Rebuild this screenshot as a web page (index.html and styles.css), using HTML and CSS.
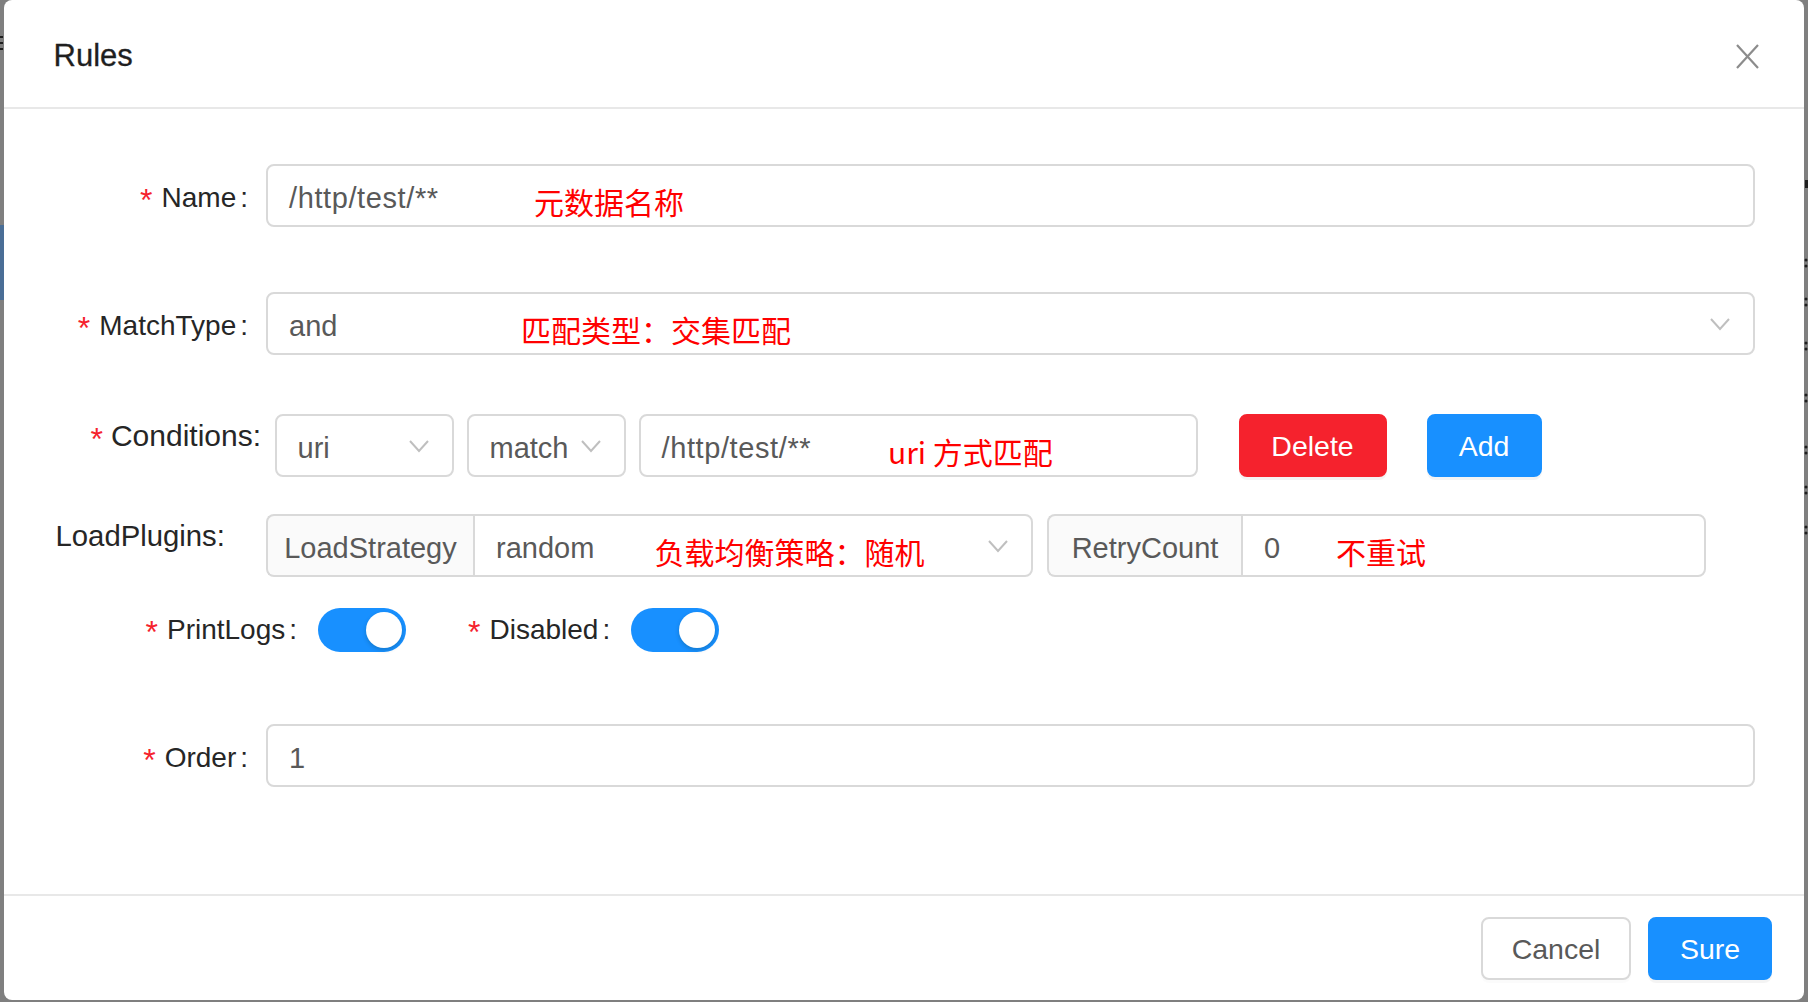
FILE: index.html
```html
<!DOCTYPE html>
<html lang="en">
<head>
<meta charset="utf-8">
<title>Rules</title>
<link rel="stylesheet" href="styles.css">
</head>
<body>
<div class="page">
  <svg class="backdrop" width="1808" height="1002" viewBox="0 0 1808 1002">
    <rect width="1808" height="1002" fill="#7f7f7f"/>
    <rect x="0" y="225" width="4" height="75" fill="#4a6e96"/>
    <g fill="#1f1f1f">
      <rect x="0" y="36" width="3" height="2"/>
      <rect x="0" y="42" width="3" height="2"/>
      <rect x="0" y="48" width="3" height="2"/>
      <rect x="1805" y="180" width="3" height="8"/>
      <circle cx="1806" cy="260" r="1.5"/><circle cx="1806" cy="266" r="1.5"/>
      <circle cx="1806" cy="299" r="1.5"/><circle cx="1806" cy="305" r="1.5"/>
      <circle cx="1806" cy="343" r="1.5"/><circle cx="1806" cy="349" r="1.5"/>
      <circle cx="1806" cy="395" r="1.5"/><circle cx="1806" cy="401" r="1.5"/>
      <circle cx="1806" cy="447" r="1.5"/><circle cx="1806" cy="453" r="1.5"/>
      <circle cx="1806" cy="487" r="1.5"/><circle cx="1806" cy="493" r="1.5"/>
      <circle cx="1806" cy="527" r="1.5"/><circle cx="1806" cy="533" r="1.5"/>
    </g>
  </svg>

  <div class="modal">
    <div class="modal-header">
      <div class="modal-title">Rules</div>
      <svg class="close" viewBox="0 0 23 25"><path d="M1 1L22 24M22 1L1 24"/></svg>
    </div>

    <div class="modal-body">
      <div class="form-row">
        <label class="form-label"><span class="req">*</span>Name<span class="colon">:</span></label>
        <div class="input grow">
          <span class="val path-val">/http/test/**</span>
          <span class="note note-name">元数据名称</span>
        </div>
      </div>

      <div class="form-row mt-match">
        <label class="form-label"><span class="req">*</span>MatchType<span class="colon">:</span></label>
        <div class="input grow">
          <span class="val">and</span>
          <svg class="arrow" viewBox="0 0 20 14"><path d="M1 2L10 12L19 2"/></svg>
          <span class="note note-match">匹配类型：交集匹配</span>
        </div>
      </div>

      <div class="cond-row">
        <div class="cond-label"><span class="req">*</span>Conditions:</div>
        <div class="input sel-uri">
          <span class="val">uri</span>
          <svg class="arrow" viewBox="0 0 20 14"><path d="M1 2L10 12L19 2"/></svg>
        </div>
        <div class="input sel-match">
          <span class="val">match</span>
          <svg class="arrow" viewBox="0 0 20 14"><path d="M1 2L10 12L19 2"/></svg>
        </div>
        <div class="input path">
          <span class="val path-val">/http/test/**</span>
          <span class="note note-path">uri 方式匹配</span>
        </div>
        <button class="btn btn-del">Delete</button>
        <button class="btn btn-add">Add</button>
      </div>

      <div class="lp-row">
        <div class="lp-label">LoadPlugins:</div>
        <div class="group">
          <div class="addon addon-ls"><span class="val">LoadStrategy</span></div>
          <div class="input sel-random">
            <span class="val">random</span>
            <svg class="arrow" viewBox="0 0 20 14"><path d="M1 2L10 12L19 2"/></svg>
            <span class="note note-random">负载均衡策略：随机</span>
          </div>
        </div>
        <div class="group group-retry">
          <div class="addon addon-rc"><span class="val">RetryCount</span></div>
          <div class="input retry">
            <span class="val">0</span>
            <span class="note note-retry">不重试</span>
          </div>
        </div>
      </div>

      <div class="sw-row">
        <div class="sw-item">
          <label class="sw-label sw-print"><span class="req">*</span>PrintLogs<span class="colon">:</span></label>
          <span class="switch"></span>
        </div>
        <div class="sw-item sw-item-dis">
          <label class="sw-label sw-dis"><span class="req">*</span>Disabled<span class="colon">:</span></label>
          <span class="switch"></span>
        </div>
      </div>

      <div class="form-row mt-order">
        <label class="form-label"><span class="req">*</span>Order<span class="colon">:</span></label>
        <div class="input grow">
          <span class="val">1</span>
        </div>
      </div>
    </div>

    <div class="modal-footer">
      <button class="btn btn-cancel">Cancel</button>
      <button class="btn btn-sure">Sure</button>
    </div>
  </div>
</div>
</body>
</html>
```

FILE: styles.css
```css
* {
  box-sizing: border-box;
}

body {
  margin: 0;
  width: 1808px;
  height: 1002px;
  overflow: hidden;
  background: #7f7f7f;
  font-family: "Liberation Sans", Arial, "Noto Sans CJK SC", sans-serif;
}

.page {
  position: relative;
  width: 1808px;
  height: 1002px;
}

.backdrop {
  display: block;
}

.modal {
  position: absolute;
  left: 4px;
  top: 0;
  width: 1800px;
  height: 1000px;
  background: #fff;
  border-radius: 8px;
  display: flex;
  flex-direction: column;
  overflow: hidden;
}

.modal-header {
  flex: none;
  height: 109px;
  border-bottom: 2px solid #e8e8e8;
  display: flex;
  align-items: center;
  justify-content: space-between;
  padding: 5px 45px 0 49.5px;
}

.modal-title {
  font-size: 31px;
  line-height: 36px;
  color: #1f1f1f;
  -webkit-text-stroke: 0.3px #1f1f1f;
}

.close {
  width: 23px;
  height: 25px;
  fill: none;
  stroke: #8c8c8c;
  stroke-width: 2.2;
}

.modal-body {
  flex: 1;
  padding: 55px 49px 0 0;
}

.form-row {
  display: flex;
  align-items: center;
  height: 63px;
}

.mt-match {
  margin-top: 65px;
}

.mt-order {
  margin-top: 72px;
}

.form-label {
  flex: none;
  width: 262px;
  text-align: right;
  font-size: 28px;
  line-height: 40px;
  padding-top: 4px;
  color: #262626;
  white-space: nowrap;
}

.req {
  color: #f5222d;
  font-size: 32px;
  line-height: 0;
  vertical-align: -4px;
  margin-right: 9px;
}

.colon {
  margin: 0 18px 0 4px;
}

.input {
  position: relative;
  flex: none;
  height: 63px;
  border: 2px solid #d9d9d9;
  border-radius: 8px;
  background: #fff;
  display: flex;
  align-items: center;
  padding: 0 23px 0 21px;
  font-size: 29px;
  color: #595959;
}

.input.grow {
  flex: 1;
}

.val {
  padding-top: 4px;
  line-height: 36px;
  white-space: nowrap;
}

.path-val {
  letter-spacing: 0.6px;
}

.arrow {
  flex: none;
  width: 20px;
  height: 14px;
  margin-left: auto;
  fill: none;
  stroke: #bfbfbf;
  stroke-width: 2;
}

.note {
  position: absolute;
  top: 19.5px;
  font-family: "Noto Sans CJK SC", sans-serif;
  font-size: 30px;
  line-height: 30px;
  letter-spacing: 0;
  color: #ff0000;
  white-space: nowrap;
}

.note-name { left: 266px; }
.note-match { left: 253px; }
.note-path { left: 247.5px; }
.note-random { left: 179.5px; }
.note-retry { left: 93px; }

/* Conditions row */
.cond-row {
  display: flex;
  align-items: flex-start;
  height: 63px;
  margin-top: 59px;
  padding-left: 86.5px;
}

.cond-label {
  flex: none;
  width: 184px;
  font-size: 30px;
  line-height: 40px;
  margin-top: 2px;
  color: #262626;
  white-space: nowrap;
}

.cond-label .req {
  margin-right: 8px;
}

.sel-uri {
  width: 179px;
  margin-right: 13px;
}

.sel-match {
  width: 159px;
  margin-right: 13px;
}

.path {
  width: 559px;
  margin-right: 41px;
}

/* Buttons */
.btn {
  flex: none;
  height: 63px;
  border-radius: 8px;
  font-family: "Liberation Sans", Arial, sans-serif;
  font-size: 28.5px;
  padding: 2px 0 0;
  display: flex;
  align-items: center;
  justify-content: center;
  cursor: pointer;
}

.btn-del {
  width: 148px;
  margin-right: 40px;
  background: #f5222d;
  border: 2px solid #f5222d;
  color: #fff;
  box-shadow: 0 3px 0 rgba(0, 0, 0, 0.045);
}

.btn-add {
  width: 115px;
  background: #1890ff;
  border: 2px solid #1890ff;
  color: #fff;
  box-shadow: 0 3px 0 rgba(0, 0, 0, 0.045);
}

/* LoadPlugins row */
.lp-row {
  display: flex;
  align-items: flex-start;
  height: 63px;
  margin-top: 37px;
  padding-left: 51.5px;
}

.lp-label {
  flex: none;
  width: 210.5px;
  font-size: 29.3px;
  line-height: 40px;
  margin-top: 2px;
  color: #262626;
  white-space: nowrap;
}

.group {
  display: flex;
  flex: none;
}

.group-retry {
  margin-left: 14px;
}

.addon {
  flex: none;
  height: 63px;
  border: 2px solid #d9d9d9;
  border-right: none;
  border-radius: 8px 0 0 8px;
  background: #fafafa;
  display: flex;
  align-items: center;
  justify-content: center;
  font-size: 29px;
  color: #595959;
}

.addon-ls {
  width: 207px;
}

.addon-rc {
  width: 194px;
}

.sel-random {
  width: 560px;
  border-radius: 0 8px 8px 0;
}

.retry {
  width: 464.5px;
  border-radius: 0 8px 8px 0;
}

/* switches */
.sw-row {
  display: flex;
  align-items: center;
  height: 44px;
  margin-top: 31px;
  padding-left: 141.5px;
}

.sw-item {
  display: flex;
  align-items: center;
}

.sw-item-dis {
  margin-left: 62px;
}

.sw-label {
  flex: none;
  font-size: 28px;
  line-height: 40px;
  color: #262626;
  white-space: nowrap;
}

.sw-print {
  width: 172.5px;
}

.sw-dis {
  width: 162.5px;
}

.sw-label .colon {
  margin-right: 0;
}

.switch {
  position: relative;
  flex: none;
  width: 88px;
  height: 44px;
  border-radius: 22px;
  background: #1890ff;
}

.switch::after {
  content: "";
  position: absolute;
  top: 4px;
  right: 4px;
  width: 36px;
  height: 36px;
  border-radius: 50%;
  background: #fff;
  box-shadow: 0 2px 4px rgba(0, 35, 11, 0.2);
}

/* footer */
.modal-footer {
  flex: none;
  height: 106px;
  border-top: 2px solid #e8e8e8;
  display: flex;
  justify-content: flex-end;
  align-items: center;
  gap: 17px;
  padding-right: 32px;
}

.btn-cancel {
  width: 150px;
  background: #fff;
  border: 2px solid #d9d9d9;
  color: #595959;
  box-shadow: 0 3px 0 rgba(0, 0, 0, 0.015);
}

.btn-sure {
  width: 124px;
  background: #1890ff;
  border: 2px solid #1890ff;
  color: #fff;
  box-shadow: 0 3px 0 rgba(0, 0, 0, 0.045);
}
```
